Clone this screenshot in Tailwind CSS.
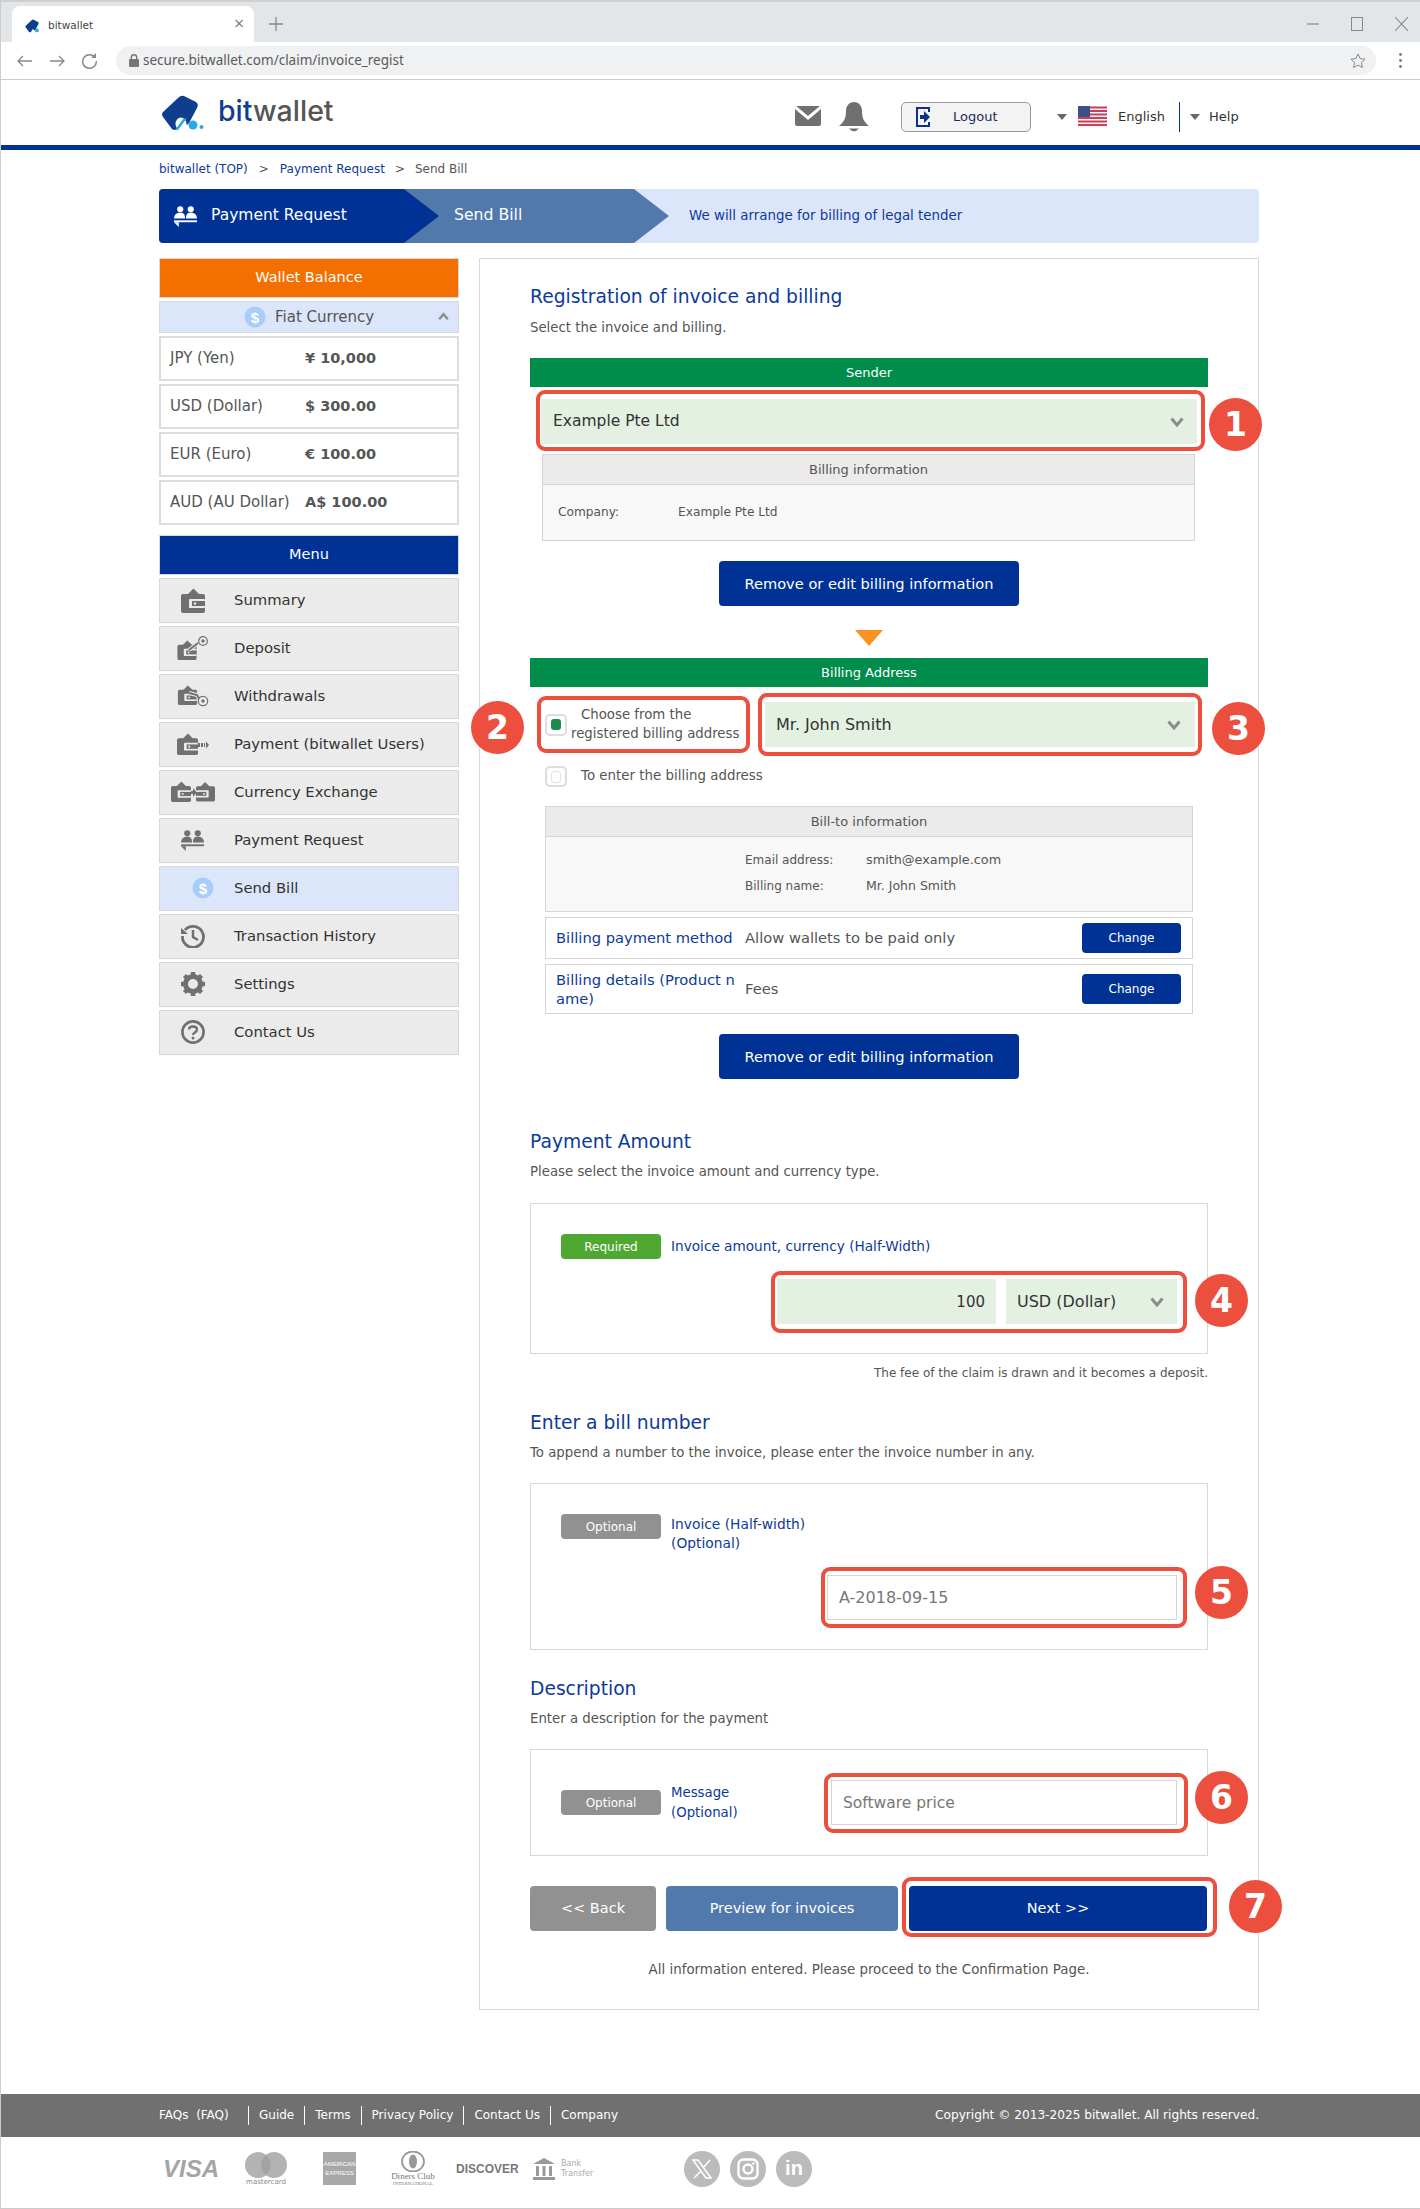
<!DOCTYPE html>
<html lang="en">
<head>
<meta charset="UTF-8" />
<title>bitwallet</title>
<script src="https://cdn.jsdelivr.net/npm/@tailwindcss/browser@4"></script>
</head>
<body class="bg-white">
<svg class="hidden">
  <symbol id="wallet" viewBox="0 0 24 25">
    <path d="M6 7 12.500 .5 19 7z" fill="#707070"/>
    <rect x="0" y="6" width="24" height="19" rx="2" fill="#707070"/>
    <rect x="8" y="11" width="16" height="9" rx="1" fill="#ebebeb"/>
    <rect x="11" y="13" width="13" height="5" fill="#707070"/>
    <circle cx="14" cy="15.500" r="1.200" fill="#ebebeb"/>
  </symbol>
  <symbol id="people" viewBox="0 0 24 22">
    <circle cx="6.500" cy="3.500" r="3.200"/><path d="M0 13c0-4 2.500-6 6.500-6s5 2 5 6z"/>
    <circle cx="17.500" cy="3.500" r="3.200"/><path d="M12.500 13c0-4 1-6 5-6s6.500 2 6.500 6z"/>
    <rect y="15" width="24" height="2"/><path d="M0 17h5v5z"/>
  </symbol>
  <symbol id="dollar" viewBox="0 0 22 22">
    <circle cx="11" cy="11" r="10.500" fill="#a9cdfb"/>
    <text x="11" y="16.500" text-anchor="middle" font-family="Liberation Sans" font-weight="700" font-size="15" fill="#fff">$</text>
  </symbol>
  <symbol id="chev" viewBox="0 0 14 10">
    <path d="M1.500 1.500 7 8l5.500-6.500" fill="none" stroke="#8c8c8c" stroke-width="3"/>
  </symbol>
</svg>

<div class="relative w-[1420px] h-[2209px] overflow-hidden font-['DejaVu_Sans',sans-serif] text-[#555] border-l border-[#ccc]">

  <!-- browser chrome -->
  <div class="h-[42px] bg-[#e3e6e9] border-t-2 border-[#cfcfcf] flex items-end relative -ml-px">
    <div class="ml-[12px] w-[242px] h-[36px] bg-white rounded-t-[8px] flex items-center pl-[13px] pt-[4px] text-[10.500px] text-[#444]">
      <svg class="w-[16px] h-[16px]" viewBox="0 0 43 36"><path d="M23 1 35 7Q38 9 36 13L28 28Q26 31 24 29 L21 26 16 34Q14 36 11 34L2 22Q0 19 2 17L17 3Q20 0 23 1z" fill="#0f3f8c"/><circle cx="32" cy="30" r="5" fill="#29abe2"/></svg>
      <span class="ml-[7px]">bitwallet</span>
      <span class="ml-auto mr-[9px] -mt-[6px] text-[#777] text-[14px]">×</span>
    </div>
    <svg class="ml-[15px] mb-[11px] w-[14px] h-[14px]" viewBox="0 0 14 14"><path d="M7 0v14M0 7h14" stroke="#8a8a8a" stroke-width="1.300"/></svg>
    <div class="ml-auto mb-[11px] flex items-center gap-[32px] pr-[12px]">
      <svg class="w-[12px] h-[12px]" viewBox="0 0 12 12"><path d="M0 6h12" stroke="#888" stroke-width="1.200"/></svg>
      <svg class="w-[12px] h-[14px]" viewBox="0 0 12 14"><rect x=".5" y=".5" width="11" height="13" fill="none" stroke="#888"/></svg>
      <svg class="w-[13px] h-[14px]" viewBox="0 0 13 14"><path d="M0 0l13 14M13 0 0 14" stroke="#888" stroke-width="1.100"/></svg>
    </div>
  </div>
  <div class="h-[38px] border-b border-[#ccc] flex items-center -ml-px">
    <svg class="ml-[17px] w-[15px] h-[12px]" viewBox="0 0 15 12"><path d="M15 6H1M6 1 1 6l5 5" fill="none" stroke="#888" stroke-width="1.300"/></svg>
    <svg class="ml-[18px] w-[15px] h-[12px]" viewBox="0 0 15 12"><path d="M0 6h14M9 1l5 5-5 5" fill="none" stroke="#888" stroke-width="1.300"/></svg>
    <svg class="ml-[16px] w-[17px] h-[17px]" viewBox="0 0 17 17"><path d="M14 5.500A6.800 6.800 0 1 0 15.300 9" fill="none" stroke="#888" stroke-width="1.500"/><path d="M15 1v5h-5z" fill="#888"/></svg>
    <div class="ml-[18px] w-[1260px] h-[29px] rounded-full bg-[#eff1f3] flex items-center pl-[13px] text-[13.500px] text-[#5a5a5a]">
      <svg class="w-[10px] h-[13px]" viewBox="0 0 10 13"><rect y="5" width="10" height="8" rx="1" fill="#777"/><path d="M2.300 5V3.500a2.700 2.700 0 0 1 5.400 0V5" fill="none" stroke="#777" stroke-width="1.400"/></svg>
      <span class="ml-[4px] font-['Noto_Sans',sans-serif]">secure.bitwallet.com/claim/invoice_regist</span>
      <svg class="ml-auto mr-[10px] w-[16px] h-[16px]" viewBox="0 0 16 16"><path d="M8 1l2.100 4.600 5 .6-3.700 3.400 1 5L8 12.100 3.600 14.600l1-5L.9 6.200l5-.6z" fill="none" stroke="#888"/></svg>
    </div>
    <svg class="ml-[23px] w-[3px] h-[15px]" viewBox="0 0 3 15"><circle cx="1.500" cy="1.500" r="1.400" fill="#777"/><circle cx="1.500" cy="7.500" r="1.400" fill="#777"/><circle cx="1.500" cy="13.500" r="1.400" fill="#777"/></svg>
  </div>

  <!-- site header -->
  <div class="h-[70px] border-b-[5px] border-[#003296] -ml-px">
    <div class="w-[1100px] ml-[159px] h-[65px] flex items-center pt-[9px]">
      <div class="w-[636px] flex items-center -mt-[9px]">
        <svg class="ml-[2px] w-[43px] h-[36px]" viewBox="0 0 43 36"><path d="M23 1 35 7Q38 9 36 13L28 28Q26 31 24 29 L21 26 16 34Q14 36 11 34L2 22Q0 19 2 17L17 3Q20 0 23 1z" fill="#0f3f8c"/><ellipse cx="20" cy="29" rx="5.500" ry="6.500" fill="#fff"/><path d="M26 23 17 35h-3l8-11z" fill="#29abe2"/><circle cx="32" cy="30" r="4.500" fill="#29abe2"/><circle cx="40.500" cy="32" r="2" fill="#29abe2"/></svg>
        <span class="ml-[14px] -mt-[2px] font-['Inter',sans-serif] font-medium text-[28.500px] leading-none"><span class="text-[#0f3f8c]">bit</span><span class="text-[#555]">wallet</span></span>
      </div>
      <svg class="w-[26px] h-[20px] -mt-[2px]" viewBox="0 0 26 20"><rect width="26" height="20" rx="2" fill="#707070"/><path d="M0 1 13 12 26 1" fill="none" stroke="#fff" stroke-width="3"/></svg>
      <svg class="ml-[18px] w-[30px] h-[30px]" viewBox="0 0 30 30"><path d="M15 0c5 0 8 4 8 9 0 7 2 11 7 15H0c5-4 7-8 7-15 0-5 3-9 8-9z" fill="#707070"/><path d="M10 26.500h10Q15 32 10 26.500z" fill="#707070"/></svg>
      <div class="ml-[32px] w-[130px] h-[30px] rounded-[5px] border border-[#999] bg-[#f3f3f3] flex items-center pl-[14px] text-[13px] text-[#1c2a5c]">
        <svg class="w-[14px] h-[20px]" viewBox="0 0 14 20"><path d="M13 5V1H1v18h12v-4" fill="none" stroke="#0f2f80" stroke-width="2"/><path d="M4 8h4V4l6 6-6 6v-4H4z" fill="#0f2f80"/></svg>
        <span class="ml-[23px]">Logout</span>
      </div>
      <div class="ml-[26px] w-0 h-0 border-x-[5px] border-x-transparent border-t-[6px] border-t-[#666]"></div>
      <svg class="ml-[11px] w-[29px] h-[22px]" viewBox="0 0 29 22"><rect width="29" height="22" fill="#f5f5f5"/><path d="M0 1.500h29M0 5h29M0 8.500h29M0 12h29M0 15.500h29M0 19h29" stroke="#c8415c" stroke-width="1.800"/><rect width="12" height="11" fill="#3c4f8a"/></svg>
      <span class="ml-[11px] w-[50px] text-[13px] text-[#333]">English</span>
      <div class="ml-[11px] w-px h-[30px] bg-[#003296]"></div>
      <div class="ml-[10px] w-0 h-0 border-x-[5px] border-x-transparent border-t-[6px] border-t-[#666]"></div>
      <span class="ml-[9px] text-[13px] text-[#333]">Help</span>
    </div>
  </div>

  <div class="w-[1100px] ml-[158px]">
    <!-- breadcrumb -->
    <div class="h-[39px] flex items-center text-[12px] pb-[2px]">
      <span class="text-[#0d3a9a]">bitwallet (TOP)</span>
      <span class="mx-[11px]">&gt;</span>
      <span class="text-[#0d3a9a]">Payment Request</span>
      <span class="mx-[10px]">&gt;</span>
      <span>Send Bill</span>
    </div>

    <!-- steps -->
    <div class="h-[54px] bg-[#dce6fb] rounded-[4px] flex overflow-hidden">
      <div class="w-[280px] shrink-0 bg-[#003296] [clip-path:polygon(0_0,245px_0,280px_50%,245px_100%,0_100%)] relative z-10 flex items-center pl-[15px] text-white text-[15.500px]">
        <svg class="w-[23px] h-[21px] fill-white"><use href="#people"/></svg>
        <span class="ml-[14px]">Payment Request</span>
      </div>
      <div class="-ml-[50px] w-[280px] shrink-0 bg-[#5279ab] [clip-path:polygon(0_0,245px_0,280px_50%,245px_100%,0_100%)] flex items-center pl-[65px] text-white text-[15.700px] pb-[2px]">Send Bill</div>
      <span class="ml-[20px] self-center text-[13.400px] text-[#0d3a9a]">We will arrange for billing of legal tender</span>
    </div>

    <div class="flex gap-[20px] mt-[15px] items-start">
      <!-- sidebar -->
      <div class="w-[300px] flex flex-col gap-[3px] text-[14.800px]">
        <div class="h-[40px] bg-[#f37000] border border-[#d8d8d8] text-white flex items-center justify-center text-[14.500px]">Wallet Balance</div>
        <div class="h-[32px] bg-[#dce6fb] border border-[#d8d8d8] flex items-center relative pl-[84px] text-[15px]">
          <svg class="w-[22px] h-[22px]"><use href="#dollar"/></svg>
          <span class="ml-[9px]">Fiat Currency</span>
          <svg class="absolute right-[9px] top-[10px] w-[11px] h-[9px] rotate-180"><use href="#chev"/></svg>
        </div>
        <div class="h-[45px] border-2 border-[#ddd] flex items-center pl-[9px] text-[15px]"><span class="w-[135px]">JPY (Yen)</span><b class="text-[14.500px]">¥ 10,000</b></div>
        <div class="h-[45px] border-2 border-[#ddd] flex items-center pl-[9px] text-[15px]"><span class="w-[135px]">USD (Dollar)</span><b class="text-[14.500px]">$ 300.00</b></div>
        <div class="h-[45px] border-2 border-[#ddd] flex items-center pl-[9px] text-[15px]"><span class="w-[135px]">EUR (Euro)</span><b class="text-[14.500px]">€ 100.00</b></div>
        <div class="h-[45px] border-2 border-[#ddd] flex items-center pl-[9px] text-[15px]"><span class="w-[135px] whitespace-nowrap">AUD (AU Dollar)</span><b class="text-[14.500px]">A$ 100.00</b></div>

        <div class="mt-[7px] h-[40px] bg-[#003296] border border-[#d8d8d8] text-white flex items-center justify-center pb-[1px] text-[14.500px]">Menu</div>

        <div class="h-[45px] bg-[#ebebeb] border border-[#d8d8d8] flex items-center text-[#333] pb-[1px]">
          <span class="w-[74px] flex justify-center pr-[9px]"><svg class="w-[24px] h-[25px]"><use href="#wallet"/></svg></span>Summary</div>
        <div class="h-[45px] bg-[#ebebeb] border border-[#d8d8d8] flex items-center text-[#333] pb-[1px]">
          <span class="w-[74px] flex justify-center pr-[9px]"><svg class="w-[32px] h-[24px]" viewBox="0 0 32 24"><use href="#wallet" width="20" height="20" y="4"/><path d="M12 14l9-7" stroke="#ebebeb" stroke-width="4"/><path d="M12 14l9-7" stroke="#707070" stroke-width="2"/><circle cx="26" cy="5" r="4.300" fill="#ebebeb" stroke="#707070" stroke-width="1.200"/><circle cx="26" cy="5" r="1.700" fill="#707070"/></svg></span>Deposit</div>
        <div class="h-[45px] bg-[#ebebeb] border border-[#d8d8d8] flex items-center text-[#333] pb-[1px]">
          <span class="w-[74px] flex justify-center pr-[9px]"><svg class="w-[32px] h-[22px]" viewBox="0 0 32 22"><use href="#wallet" width="21" height="20"/><path d="M12 8l8 2 3 5" fill="none" stroke="#ebebeb" stroke-width="4"/><path d="M12 8l8 2 3 5" fill="none" stroke="#707070" stroke-width="2"/><circle cx="26" cy="16" r="4.700" fill="#ebebeb" stroke="#707070" stroke-width="1.200"/><circle cx="26" cy="16" r="1.700" fill="#707070"/></svg></span>Withdrawals</div>
        <div class="h-[45px] bg-[#ebebeb] border border-[#d8d8d8] flex items-center text-[#333] pb-[1px]">
          <span class="w-[74px] flex justify-center pr-[9px]"><svg class="w-[32px] h-[22px]" viewBox="0 0 32 22"><use href="#wallet" width="21" height="22"/><path d="M21 10h2v4h-2zM24 10h2v4h-2zM27 10h1v4h-1zM29 8.500l3 3.500-3 3.500z" fill="#707070"/></svg></span><span class="whitespace-nowrap">Payment (bitwallet Users)</span></div>
        <div class="h-[45px] bg-[#ebebeb] border border-[#d8d8d8] flex items-center text-[#333] pb-[1px]">
          <span class="w-[74px] flex justify-center pr-[9px]"><svg class="w-[44px] h-[22px]" viewBox="0 0 44 22"><use href="#wallet" width="20" height="21"/><path d="M20 10h2v3h-2z" fill="#707070"/><path d="M22 7l4 4.500-4 4.500z" fill="#707070"/><use href="#wallet" width="19" height="21" transform="translate(44 0) scale(-1 1)"/></svg></span>Currency Exchange</div>
        <div class="h-[45px] bg-[#ebebeb] border border-[#d8d8d8] flex items-center text-[#333] pb-[1px]">
          <span class="w-[74px] flex justify-center pr-[9px]"><svg class="w-[23px] h-[21px] fill-[#707070]"><use href="#people"/></svg></span>Payment Request</div>
        <div class="h-[45px] bg-[#dce6fb] border border-[#d8d8d8] flex items-center text-[#333] pb-[1px]">
          <span class="w-[74px] flex justify-center pl-[12px]"><svg class="w-[22px] h-[22px]"><use href="#dollar"/></svg></span>Send Bill</div>
        <div class="h-[45px] bg-[#ebebeb] border border-[#d8d8d8] flex items-center text-[#333] pb-[1px]">
          <span class="w-[74px] flex justify-center pr-[9px]"><svg class="w-[24px] h-[24px]" viewBox="0 0 24 24"><path d="M4 6A10.500 10.500 0 1 1 1.500 12" fill="none" stroke="#707070" stroke-width="2.800"/><path d="M0 4l7 6H0z" fill="#707070"/><path d="M12 6v7l5 3" fill="none" stroke="#707070" stroke-width="2.500"/></svg></span>Transaction History</div>
        <div class="h-[45px] bg-[#ebebeb] border border-[#d8d8d8] flex items-center text-[#333] pb-[1px]">
          <span class="w-[74px] flex justify-center pr-[9px]"><svg class="w-[24px] h-[24px]" viewBox="0 0 24 24"><circle cx="12" cy="12" r="7.500" fill="none" stroke="#707070" stroke-width="5"/><path d="M12 0v5M12 19v5M0 12h5M19 12h5M3.500 3.500 7 7M17 17l3.500 3.500M20.500 3.500 17 7M7 17l-3.500 3.500" stroke="#707070" stroke-width="4.500"/></svg></span>Settings</div>
        <div class="h-[45px] bg-[#ebebeb] border border-[#d8d8d8] flex items-center text-[#333] pb-[1px]">
          <span class="w-[74px] flex justify-center pr-[9px]"><svg class="w-[24px] h-[24px]" viewBox="0 0 24 24"><circle cx="12" cy="12" r="10.600" fill="none" stroke="#707070" stroke-width="2.600"/><path d="M8 9.500C8 5.500 16 5.500 16 9.500c0 3-4 3-4 5.500" fill="none" stroke="#707070" stroke-width="2.300"/><circle cx="12" cy="18" r="1.500" fill="#707070"/></svg></span>Contact Us</div>
      </div>

      <!-- main panel -->
      <div class="w-[780px] h-[1752px] border border-[#d8d8d8] pl-[50px] pr-[50px] pt-[26px] text-[13.300px]">
        <h2 class="h-[24px] leading-[24px] text-[18.700px] text-[#0d3a9a]">Registration of invoice and billing</h2>
        <p class="mt-[9px] h-[20px] leading-[20px]">Select the invoice and billing.</p>

        <div class="mt-[20px] h-[29px] bg-[#008c4a] text-white flex items-center justify-center text-[13px]">Sender</div>
        <div class="mt-[12px] ml-[11px] w-[656px] h-[45px] relative">
          <select class="appearance-none w-full h-full bg-[#e3f0e2] pl-[12px] text-[15.500px] text-[#333]"><option>Example Pte Ltd</option></select>
          <svg class="absolute right-[13px] top-[18px] w-[14px] h-[10px]"><use href="#chev"/></svg>
        </div>
        <div class="mt-[10px] ml-[12px] w-[653px] h-[87px] border border-[#d5d5d5] bg-[#f8f8f8]">
          <div class="h-[30px] bg-[#ebebeb] border-b border-[#d5d5d5] flex items-center justify-center text-[13px]">Billing information</div>
          <div class="h-[55px] flex items-center pl-[15px] text-[12.200px]"><span class="w-[120px]">Company:</span><span>Example Pte Ltd</span></div>
        </div>
        <button class="block mx-auto mt-[20px] w-[300px] h-[45px] rounded-[4px] bg-[#003296] text-white text-[14.600px]">Remove or edit billing information</button>
        <div class="mx-auto mt-[24px] w-0 h-0 border-x-[14px] border-x-transparent border-t-[16px] border-t-[#f7931e]"></div>

        <div class="mt-[12px] h-[29px] bg-[#008c4a] text-white flex items-center justify-center text-[13px]">Billing Address</div>
        <div class="mt-[15px] ml-[15px] flex items-center">
          <span class="w-[22px] h-[22px] shrink-0 rounded-[5px] border-2 border-[#ddd] flex items-center justify-center"><span class="w-[10px] h-[11px] rounded-[3px] bg-[#1f8a4c]"></span></span>
          <span class="w-[198px] pl-[4px] pb-[2px] leading-[19px] text-[13.300px] whitespace-nowrap"><span class="ml-[10px]">Choose from the</span><br>registered billing address</span>
          <div class="w-[430px] h-[45px] relative">
            <select class="appearance-none w-full h-full bg-[#e3f0e2] pl-[11px] text-[16px] text-[#333]"><option>Mr. John Smith</option></select>
            <svg class="absolute right-[14px] top-[18px] w-[14px] h-[10px]"><use href="#chev"/></svg>
          </div>
        </div>
        <div class="mt-[19px] ml-[15px] h-[21px] flex items-center">
          <span class="w-[22px] h-[21px] rounded-[5px] border-2 border-[#ddd] flex items-center justify-center"><span class="w-[10px] h-[12px] rounded-[3px] border border-[#e3e3e3]"></span></span>
          <span class="ml-[14px] text-[13.400px]">To enter the billing address</span>
        </div>
        <div class="mt-[19px] ml-[15px] w-[648px] h-[106px] border border-[#d5d5d5] bg-[#f8f8f8]">
          <div class="h-[30px] bg-[#ebebeb] border-b border-[#d5d5d5] flex items-center justify-center text-[13px]">Bill-to information</div>
          <div class="pl-[199px] pt-[10px] text-[12px] leading-[26px]">
            <div class="flex"><span class="w-[121px]">Email address:</span><span class="text-[12.800px]">smith@example.com</span></div>
            <div class="flex"><span class="w-[121px]">Billing name:</span><span class="text-[12.500px]">Mr. John Smith</span></div>
          </div>
        </div>
        <div class="mt-[5px] ml-[15px] w-[648px] h-[42px] border border-[#d5d5d5] flex items-center text-[14.700px]">
          <span class="w-[199px] pl-[10px] text-[#0d3a9a] whitespace-nowrap">Billing payment method</span>
          <span>Allow wallets to be paid only</span>
          <button class="ml-auto mr-[11px] w-[99px] h-[30px] rounded-[4px] bg-[#003296] text-white text-[12px]">Change</button>
        </div>
        <div class="mt-[5px] ml-[15px] w-[648px] h-[50px] border border-[#d5d5d5] flex items-center text-[14.700px]">
          <span class="w-[199px] pl-[10px] pr-[8px] text-[#0d3a9a] leading-[19px] break-all">Billing details (Product name)</span>
          <span>Fees</span>
          <button class="ml-auto mr-[11px] w-[99px] h-[30px] rounded-[4px] bg-[#003296] text-white text-[12px]">Change</button>
        </div>
        <button class="block mx-auto mt-[20px] w-[300px] h-[45px] rounded-[4px] bg-[#003296] text-white text-[14.600px]">Remove or edit billing information</button>

        <h2 class="mt-[51px] h-[24px] leading-[24px] text-[18.700px] text-[#0d3a9a]">Payment Amount</h2>
        <p class="mt-[8px] h-[20px] leading-[20px]">Please select the invoice amount and currency type.</p>
        <div class="mt-[21px] h-[151px] border border-[#d8d8d8] pl-[30px] pt-[30px]">
          <div class="flex items-center">
            <span class="w-[100px] h-[25px] rounded-[4px] bg-[#4fa832] text-white text-[12px] flex items-center justify-center">Required</span>
            <span class="ml-[10px] pb-[1px] text-[#0d3a9a] text-[13.650px]">Invoice amount, currency (Half-Width)</span>
          </div>
          <div class="mt-[20px] ml-[216px] flex gap-[10px]">
            <input value="100" class="w-[219px] h-[45px] bg-[#e3f0e2] text-right pr-[11px] text-[15px] text-[#333]" />
            <div class="w-[171px] h-[45px] relative">
              <select class="appearance-none w-full h-full bg-[#e3f0e2] pl-[11px] text-[16px] text-[#333]"><option>USD (Dollar)</option></select>
              <svg class="absolute right-[13px] top-[18px] w-[14px] h-[10px]"><use href="#chev"/></svg>
            </div>
          </div>
        </div>
        <p class="mt-[9px] h-[20px] leading-[20px] text-right text-[12px]">The fee of the claim is drawn and it becomes a deposit.</p>

        <h2 class="mt-[28px] h-[24px] leading-[24px] text-[18.700px] text-[#0d3a9a]">Enter a bill number</h2>
        <p class="mt-[8px] h-[20px] leading-[20px]">To append a number to the invoice, please enter the invoice number in any.</p>
        <div class="mt-[20px] h-[167px] border border-[#d8d8d8] pl-[30px] pt-[30px]">
          <div class="h-[40px] flex items-start">
            <span class="w-[100px] h-[25px] rounded-[4px] bg-[#919191] text-white text-[12px] flex items-center justify-center">Optional</span>
            <span class="ml-[10px] text-[#0d3a9a] text-[13.800px] leading-[19px] pt-[1px]">Invoice (Half-width)<br>(Optional)</span>
          </div>
          <input placeholder="A-2018-09-15" class="block mt-[21px] ml-[266px] w-[350px] h-[45px] border border-[#d5d5d5] pl-[11px] text-[16px] placeholder:text-[#777]" />
        </div>

        <h2 class="mt-[27px] h-[24px] leading-[24px] text-[18.700px] text-[#0d3a9a]">Description</h2>
        <p class="mt-[8px] h-[20px] leading-[20px]">Enter a description for the payment</p>
        <div class="mt-[20px] h-[107px] border border-[#d8d8d8] pl-[30px] flex items-center">
          <span class="w-[100px] h-[25px] rounded-[4px] bg-[#919191] text-white text-[12px] flex items-center justify-center">Optional</span>
          <span class="ml-[10px] w-[160px] text-[#0d3a9a] leading-[20px]">Message<br>(Optional)</span>
          <input placeholder="Software price" class="w-[346px] h-[45px] border border-[#d5d5d5] pl-[11px] text-[15.500px] placeholder:text-[#777]" />
        </div>

        <div class="mt-[30px] flex gap-[10px] text-[14.500px] text-white">
          <button class="w-[126px] h-[45px] rounded-[4px] bg-[#919191]">&lt;&lt; Back</button>
          <button class="w-[232px] h-[45px] rounded-[4px] bg-[#5279ab]">Preview for invoices</button>
          <button class="w-[298px] h-[45px] rounded-[4px] bg-[#003296] ml-[1px]">Next &gt;&gt;</button>
        </div>
        <p class="mt-[29px] h-[20px] leading-[20px] text-center text-[13.400px]">All information entered. Please proceed to the Confirmation Page.</p>
      </div>
    </div>
  </div>

  <!-- footer -->
  <div class="mt-[84px] -ml-px h-[43px] bg-[#707070] text-white text-[12px]">
    <div class="w-[1100px] ml-[159px] h-full flex items-center pb-[1px]">
      <span class="w-[89px] whitespace-pre">FAQs  (FAQ)</span>
      <span class="border-l border-white px-[10px] leading-[19px]">Guide</span>
      <span class="border-l border-white px-[10px] leading-[19px]">Terms</span>
      <span class="border-l border-white px-[10px] leading-[19px]">Privacy Policy</span>
      <span class="border-l border-white px-[10px] leading-[19px]">Contact Us</span>
      <span class="border-l border-white px-[10px] leading-[19px]">Company</span>
      <span class="ml-auto text-[12.150px]">Copyright © 2013-2025 bitwallet. All rights reserved.</span>
    </div>
  </div>
  <div class="-ml-px h-[72px] border-b border-[#ccc]">
    <div class="ml-[163px] h-full flex items-center pb-[8px] text-[#aaa]">
      <span class="w-[56px] font-['Liberation_Sans',sans-serif] font-bold italic text-[24px] text-[#a5a5a5]">VISA</span>
      <div class="ml-[26px] w-[42px] flex flex-col items-center">
        <svg class="w-[42px] h-[26px]" viewBox="0 0 42 26"><circle cx="13" cy="13" r="13" fill="#b3b3b3"/><circle cx="29" cy="13" r="13" fill="#b3b3b3"/><path d="M21 3a13 13 0 0 1 0 20 13 13 0 0 1 0-20z" fill="#a3a3a3"/></svg>
        <span class="text-[7px] leading-[8px] text-[#888]">mastercard</span>
      </div>
      <div class="ml-[36px] w-[33px] h-[33px] bg-[#a8a8a8] flex flex-col items-center justify-center text-[6px] leading-[9px] text-white font-['Liberation_Sans',sans-serif]"><span>AMERICAN</span><span>EXPRESS</span></div>
      <div class="ml-[33px] w-[48px] flex flex-col items-center text-[#777] font-['Liberation_Serif',serif]">
        <svg class="w-[24px] h-[21px]" viewBox="0 0 24 21"><ellipse cx="12" cy="10.500" rx="11" ry="10" fill="none" stroke="#999" stroke-width="1.800"/><ellipse cx="12" cy="10.500" rx="4" ry="7" fill="#999"/></svg>
        <span class="text-[9px] leading-[9px]">Diners Club</span>
        <span class="text-[5px] leading-[6px] whitespace-nowrap">INTERNATIONAL</span>
      </div>
      <span class="ml-[19px] w-[60px] font-['Liberation_Sans',sans-serif] font-bold text-[12px] text-[#777]">DISCOVER</span>
      <svg class="ml-[17px] w-[22px] h-[22px]" viewBox="0 0 22 22"><path d="M11 0 22 6H0z" fill="#999"/><path d="M3 8h3v10H3zM9.500 8h3v10h-3zM16 8h3v10h-3zM0 19h22v3H0z" fill="#999"/></svg>
      <span class="ml-[6px] w-[34px] text-[8px] leading-[10px] text-[#aaa]">Bank<br>Transfer</span>
      <div class="ml-[89px] flex gap-[10px]">
        <span class="w-[36px] h-[36px] rounded-full bg-[#bbb] flex items-center justify-center"><svg class="w-[20px] h-[20px]" viewBox="0 0 20 20"><path d="M1 1h5l13 18h-5zM18 1 11 9M9 12 2 19" fill="none" stroke="#fff" stroke-width="1.500"/></svg></span>
        <span class="w-[36px] h-[36px] rounded-full bg-[#bbb] flex items-center justify-center"><svg class="w-[22px] h-[22px]" viewBox="0 0 22 22"><rect x="1.500" y="1.500" width="19" height="19" rx="5" fill="none" stroke="#fff" stroke-width="2.400"/><circle cx="11" cy="11" r="4.500" fill="none" stroke="#fff" stroke-width="2.400"/><circle cx="16.500" cy="5.500" r="1.300" fill="#fff"/></svg></span>
        <span class="w-[36px] h-[36px] rounded-full bg-[#bbb] flex items-center justify-center text-white font-bold text-[20px] pb-[2px] font-['Liberation_Sans',sans-serif]">in</span>
      </div>
    </div>
  </div>

  <!-- annotations laid over the form -->
  <div class="absolute left-[535px] top-[390px] w-[669px] h-[61px] border-4 border-[#ec4f3d] rounded-[9px]"></div>
  <div class="absolute left-[536px] top-[696px] w-[213px] h-[57px] border-4 border-[#ec4f3d] rounded-[9px]"></div>
  <div class="absolute left-[757px] top-[693px] w-[444px] h-[63px] border-4 border-[#ec4f3d] rounded-[9px]"></div>
  <div class="absolute left-[770px] top-[1271px] w-[416px] h-[62px] border-4 border-[#ec4f3d] rounded-[9px]"></div>
  <div class="absolute left-[820px] top-[1567px] w-[366px] h-[61px] border-4 border-[#ec4f3d] rounded-[9px]"></div>
  <div class="absolute left-[823px] top-[1773px] w-[364px] h-[60px] border-4 border-[#ec4f3d] rounded-[9px]"></div>
  <div class="absolute left-[901px] top-[1877px] w-[315px] h-[60px] border-4 border-[#ec4f3d] rounded-[9px]"></div>

  <div class="absolute left-[1208px] top-[398px] w-[53px] h-[53px] rounded-full bg-[#ec4f3d] text-white font-bold text-[33px] flex items-center justify-center">1</div>
  <div class="absolute left-[470px] top-[701px] w-[53px] h-[53px] rounded-full bg-[#ec4f3d] text-white font-bold text-[33px] flex items-center justify-center">2</div>
  <div class="absolute left-[1211px] top-[702px] w-[53px] h-[53px] rounded-full bg-[#ec4f3d] text-white font-bold text-[33px] flex items-center justify-center">3</div>
  <div class="absolute left-[1194px] top-[1274px] w-[53px] h-[53px] rounded-full bg-[#ec4f3d] text-white font-bold text-[33px] flex items-center justify-center">4</div>
  <div class="absolute left-[1194px] top-[1566px] w-[53px] h-[53px] rounded-full bg-[#ec4f3d] text-white font-bold text-[33px] flex items-center justify-center">5</div>
  <div class="absolute left-[1194px] top-[1771px] w-[53px] h-[53px] rounded-full bg-[#ec4f3d] text-white font-bold text-[33px] flex items-center justify-center">6</div>
  <div class="absolute left-[1228px] top-[1880px] w-[53px] h-[53px] rounded-full bg-[#ec4f3d] text-white font-bold text-[33px] flex items-center justify-center">7</div>
</div>
</body>
</html>
